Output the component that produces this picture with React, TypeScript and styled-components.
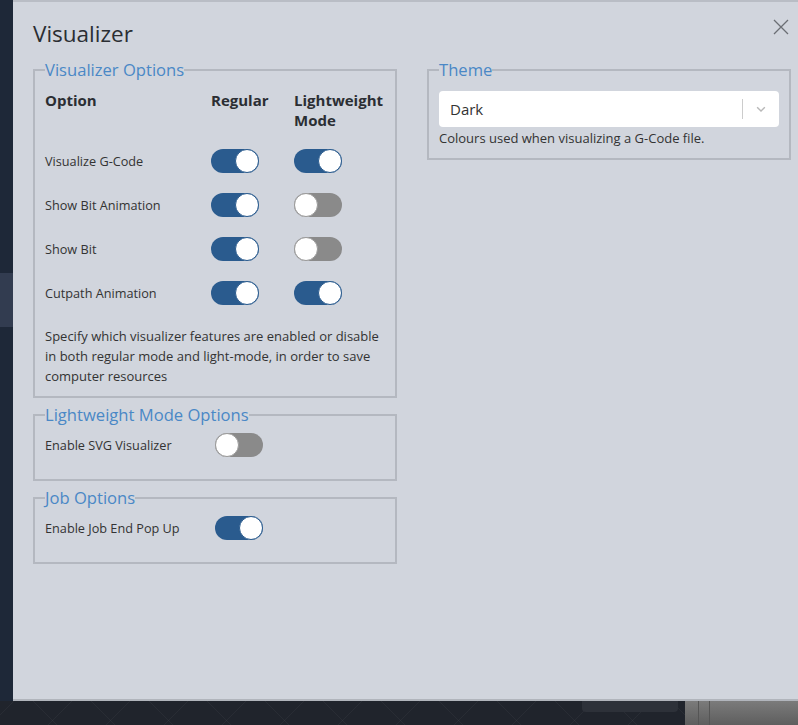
import React from "react";
import styled, { createGlobalStyle } from "styled-components";

const Global = createGlobalStyle`
  html, body { margin: 0; padding: 0; }
  body { font-family: "Open Sans", "Noto Sans", Arial, sans-serif; background: #1e2838; }
  * { box-sizing: border-box; }
`;

const Screen = styled.div`
  width: 798px;
  height: 725px;
  display: grid;
  grid-template-rows: 701px 1fr;
  overflow: hidden;
  background: #1e2838;
`;

const Main = styled.div`
  display: grid;
  grid-template-columns: 13px 1fr;
`;

const SideStrip = styled.div`
  background: #1e2838;
  display: flex;
  flex-direction: column;
  padding-top: 273px;
`;

const SideHighlight = styled.div`
  height: 54px;
  background: #323c50;
`;

const Modal = styled.div`
  position: relative;
  background: #d1d5dd;
  border-top: 2px solid #b9bdc5;
  border-bottom: 2px solid #b1b5bc;
  padding: 16px 8px 0 20px;
`;

const Title = styled.h1`
  margin: 0 0 9px 0;
  font-size: 22.5px;
  font-weight: 400;
  line-height: 32px;
  color: #2b2e33;
`;

const CloseButton = styled.button`
  position: absolute;
  top: 16px;
  right: 9px;
  width: 18px;
  height: 18px;
  padding: 0;
  border: none;
  background: transparent;
  display: flex;
  align-items: center;
  justify-content: center;
`;

const Columns = styled.div`
  display: grid;
  grid-template-columns: 364px 364px;
  column-gap: 30px;
  align-items: start;
`;

const Column = styled.div<{ $gap?: number }>`
  display: flex;
  flex-direction: column;
  gap: ${(p) => p.$gap ?? 7}px;
`;

const Fieldset = styled.fieldset<{ $pb?: number }>`
  margin: 0;
  border: 2px solid #b4b8c0;
  padding: 0 10px ${(p) => p.$pb ?? 10}px 10px;
  min-width: 0;
`;

const Legend = styled.legend`
  padding: 0;
  font-size: 16.6px;
  line-height: 22px;
  color: #4a88c6;
`;

const OptionsGrid = styled.div`
  display: grid;
  grid-template-columns: 166px 83px 1fr;
  padding-top: 9px;
`;

const HeadCell = styled.div`
  font-size: 15px;
  font-weight: 700;
  line-height: 20px;
  color: #2b2e33;
  height: 49px;
`;

const Label = styled.div`
  font-size: 12.7px;
  color: #333;
  height: 44px;
  display: flex;
  align-items: center;
`;

const ToggleCell = styled.div`
  height: 44px;
  display: flex;
  align-items: center;
`;

const Description = styled.p`
  margin: 11px 0 0 0;
  font-size: 13px;
  line-height: 20px;
  color: #333;
`;

const SingleRow = styled.div`
  display: grid;
  grid-template-columns: 170px auto;
  align-items: center;
  height: 29px;
  margin: -3px 0 27px 0;
`;

const Track = styled.span<{ $on: boolean }>`
  position: relative;
  display: inline-block;
  width: 48px;
  height: 24px;
  border-radius: 12px;
  background: ${(p) => (p.$on ? "#2a5b8e" : "#8a8a8a")};
`;

const Knob = styled.span<{ $on: boolean }>`
  position: absolute;
  top: 0;
  left: ${(p) => (p.$on ? "24px" : "0")};
  width: 24px;
  height: 24px;
  border-radius: 50%;
  background: #fff;
  border: 1px solid ${(p) => (p.$on ? "#2a5b8e" : "#9a9a9a")};
`;

const Toggle = ({ on }: { on: boolean }) => (
  <Track $on={on}>
    <Knob $on={on} />
  </Track>
);

const SelectBox = styled.div`
  margin-top: 10px;
  height: 36px;
  background: #fff;
  border-radius: 4px;
  display: flex;
  align-items: center;
  padding-left: 11px;
`;

const SelectValue = styled.div`
  flex: 1;
  font-size: 15px;
  color: #333;
`;

const Separator = styled.span`
  width: 1px;
  height: 20px;
  background: #ccc;
`;

const Chevron = styled.span`
  width: 36px;
  display: flex;
  align-items: center;
  justify-content: center;
`;

const Help = styled.div`
  font-size: 13px;
  line-height: 20px;
  color: #333;
  margin: 1px 0 0 0;
`;

const Bottom = styled.div`
  display: grid;
  grid-template-columns: 685px 1fr;
`;

const Floor = styled.div`
  background:
    repeating-linear-gradient(45deg, transparent 0 40px, rgba(255,255,255,0.04) 40px 41px),
    repeating-linear-gradient(-45deg, transparent 0 40px, rgba(255,255,255,0.04) 40px 41px),
    #20242c;
  display: flex;
  justify-content: flex-end;
  padding-right: 7px;
`;

const FloorButton = styled.div`
  width: 96px;
  height: 11px;
  background: #2d3139;
  border-radius: 0 0 4px 4px;
`;

const RightPanel = styled.div`
  background: linear-gradient(#7b7b7b, #5e5e5e);
  display: flex;
  padding-left: 13px;
  gap: 10px;
`;

const VLine = styled.span`
  width: 1px;
  background: #555;
`;

const rows: { label: string; regular: boolean; light: boolean }[] = [
  { label: "Visualize G-Code", regular: true, light: true },
  { label: "Show Bit Animation", regular: true, light: false },
  { label: "Show Bit", regular: true, light: false },
  { label: "Cutpath Animation", regular: true, light: true },
];

export default function App() {
  return (
    <>
      <Global />
      <Screen>
        <Main>
          <SideStrip>
            <SideHighlight />
          </SideStrip>
          <Modal>
            <CloseButton aria-label="Close">
              <svg width="16" height="16" viewBox="0 0 16 16">
                <path d="M1 1L15 15M15 1L1 15" stroke="#6b6e74" strokeWidth="1.3" fill="none" />
              </svg>
            </CloseButton>
            <Title>Visualizer</Title>
            <Columns>
              <Column $gap={6}>
                <Fieldset>
                  <Legend>Visualizer Options</Legend>
                  <OptionsGrid>
                    <HeadCell>Option</HeadCell>
                    <HeadCell>Regular</HeadCell>
                    <HeadCell>
                      Lightweight
                      <br />
                      Mode
                    </HeadCell>
                    {rows.map((r) => (
                      <React.Fragment key={r.label}>
                        <Label>{r.label}</Label>
                        <ToggleCell>
                          <Toggle on={r.regular} />
                        </ToggleCell>
                        <ToggleCell>
                          <Toggle on={r.light} />
                        </ToggleCell>
                      </React.Fragment>
                    ))}
                  </OptionsGrid>
                  <Description>
                    Specify which visualizer features are enabled or disable in both regular mode and light-mode, in order to save computer resources
                  </Description>
                </Fieldset>
                <Fieldset $pb={0}>
                  <Legend>Lightweight Mode Options</Legend>
                  <SingleRow>
                    <Label>Enable SVG Visualizer</Label>
                    <Toggle on={false} />
                  </SingleRow>
                </Fieldset>
                <Fieldset $pb={0}>
                  <Legend>Job Options</Legend>
                  <SingleRow>
                    <Label>Enable Job End Pop Up</Label>
                    <Toggle on={true} />
                  </SingleRow>
                </Fieldset>
              </Column>
              <Column>
                <Fieldset>
                  <Legend>Theme</Legend>
                  <SelectBox>
                    <SelectValue>Dark</SelectValue>
                    <Separator />
                    <Chevron>
                      <svg width="14" height="14" viewBox="0 0 20 20">
                        <path d="M4.5 7.5L10 13L15.5 7.5" stroke="#b8b8b8" strokeWidth="2" fill="none" />
                      </svg>
                    </Chevron>
                  </SelectBox>
                  <Help>Colours used when visualizing a G-Code file.</Help>
                </Fieldset>
              </Column>
            </Columns>
          </Modal>
        </Main>
        <Bottom>
          <Floor>
            <FloorButton />
          </Floor>
          <RightPanel>
            <VLine />
            <VLine />
          </RightPanel>
        </Bottom>
      </Screen>
    </>
  );
}
